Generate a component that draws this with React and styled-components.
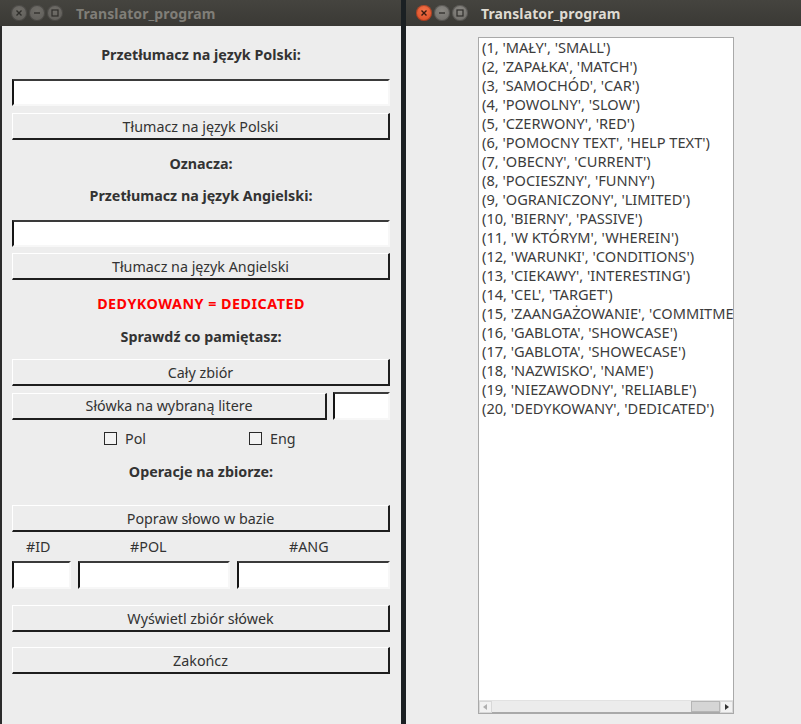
import React from 'react'
import styled, { createGlobalStyle } from 'styled-components'

const GlobalStyle = createGlobalStyle`
  html, body {
    margin: 0;
    padding: 0;
    background: #1b2023;
  }
  * {
    box-sizing: border-box;
  }
`

const words = [
  [1, 'MAŁY', 'SMALL'],
  [2, 'ZAPAŁKA', 'MATCH'],
  [3, 'SAMOCHÓD', 'CAR'],
  [4, 'POWOLNY', 'SLOW'],
  [5, 'CZERWONY', 'RED'],
  [6, 'POMOCNY TEXT', 'HELP TEXT'],
  [7, 'OBECNY', 'CURRENT'],
  [8, 'POCIESZNY', 'FUNNY'],
  [9, 'OGRANICZONY', 'LIMITED'],
  [10, 'BIERNY', 'PASSIVE'],
  [11, 'W KTÓRYM', 'WHEREIN'],
  [12, 'WARUNKI', 'CONDITIONS'],
  [13, 'CIEKAWY', 'INTERESTING'],
  [14, 'CEL', 'TARGET'],
  [15, 'ZAANGAŻOWANIE', 'COMMITMENT'],
  [16, 'GABLOTA', 'SHOWCASE'],
  [17, 'GABLOTA', 'SHOWECASE'],
  [18, 'NAZWISKO', 'NAME'],
  [19, 'NIEZAWODNY', 'RELIABLE'],
  [20, 'DEDYKOWANY', 'DEDICATED'],
]

const Desktop = styled.div`
  display: flex;
  width: 801px;
  height: 724px;
  gap: 5px;
  overflow: hidden;
  font-family: "Noto Sans", "DejaVu Sans", sans-serif;
`

const Window = styled.div`
  display: flex;
  flex-direction: column;
  width: ${p => p.$width || 'auto'};
  flex: ${p => (p.$width ? '0 0 auto' : '1')};
  height: 100%;
`

const TitleBar = styled.div`
  height: 26px;
  flex: 0 0 26px;
  display: flex;
  align-items: center;
  padding-left: ${p => p.$pad}px;
  background: linear-gradient(#45443f, #3a3935);
`

const Controls = styled.div`
  display: flex;
  gap: 2px;
  margin-right: 13px;
`

const CtlButton = styled.div`
  width: 16px;
  height: 16px;
  border-radius: 50%;
  display: flex;
  align-items: center;
  justify-content: center;
  background: ${p => (p.$close ? 'radial-gradient(circle at 50% 35%, #f0734a, #d9461f)' : p.$active ? 'radial-gradient(circle at 50% 35%, #8a8883, #6a6864)' : 'radial-gradient(circle at 50% 35%, #6f6d68, #5d5b57)')};
  box-shadow: inset 0 0 0 1px rgba(0, 0, 0, 0.25);
`

const Title = styled.div`
  font-weight: 700;
  font-size: 14px;
  color: ${p => (p.$active ? '#dfdbd2' : '#807e78')};
  letter-spacing: 0.1px;
`

const LeftBody = styled.div`
  flex: 1;
  display: flex;
  flex-direction: column;
  background: #ededed;
  border-left: 2px solid #2b2b2b;
  padding: 0 11px 0 10px;
  color: #333;
  font-size: 14.3px;
`

const RightBody = styled.div`
  flex: 1;
  background: #ededed;
  padding: 11px 0 10px 72px;
`

const Label = styled.div`
  height: 20px;
  line-height: 20px;
  text-align: center;
  font-weight: 700;
  color: ${p => p.$color || '#333'};
  letter-spacing: ${p => (p.$color ? '0.5px' : 'normal')};
  margin-top: ${p => p.$mt}px;
`

const Entry = styled.div`
  height: ${p => p.$h || 27}px;
  width: ${p => (p.$w ? `${p.$w}px` : 'auto')};
  flex: ${p => (p.$w ? '0 0 auto' : '1')};
  background: #fff;
  border-style: solid;
  border-width: 2px;
  border-color: #3a3a3a #f7f7f7 #f7f7f7 #151515;
`

const Button = styled.div`
  height: 27px;
  flex: 1;
  display: flex;
  align-items: center;
  justify-content: center;
  background: #ededed;
  border-style: solid;
  border-width: 1px 2px 2px 1px;
  border-color: #ffffff #1e1e1e #1e1e1e #ffffff;
  color: #333;
`

const Row = styled.div`
  display: flex;
  align-items: center;
  gap: ${p => p.$gap || 6}px;
  margin-top: ${p => p.$mt}px;
`

const CheckRow = styled.div`
  display: grid;
  grid-template-columns: 92px 145px 1fr;
  height: 20px;
  align-items: center;
  margin-top: 8px;
`

const Check = styled.label`
  grid-column: ${p => p.$col};
  display: flex;
  align-items: center;
  gap: 8px;
  color: #333;
`

const Box = styled.span`
  width: 13px;
  height: 13px;
  border: 1px solid #2a2a2a;
  background: #f3f3f3;
`

const FieldLabels = styled.div`
  display: grid;
  grid-template-columns: 66px 158px 1fr;
  height: 20px;
  line-height: 20px;
  margin-top: 5px;
  color: #333;
`

const FieldLabel = styled.span`
  padding-left: ${p => p.$pad}px;
`

const Listbox = styled.div`
  width: 256px;
  height: 677px;
  background: #fff;
  border: 1px solid #a9a9a9;
  display: flex;
  flex-direction: column;
  overflow: hidden;
`

const ListLines = styled.div`
  flex: 1;
  padding: 0 0 0 3px;
  overflow: hidden;
`

const ListLine = styled.div`
  height: 19px;
  line-height: 19px;
  white-space: nowrap;
  font-size: 14.6px;
  color: #3c3c3c;
`

const Scrollbar = styled.div`
  flex: 0 0 13px;
  display: flex;
  background: #ececec;
  border-top: 1px solid #e2e2e2;
`

const Arrow = styled.div`
  width: 13px;
  display: flex;
  align-items: center;
  justify-content: center;
  border: 1px solid #d8d8d8;
  background: #f2f2f2;
`

const Trough = styled.div`
  flex: 1;
  display: flex;
  justify-content: flex-end;
  background: #ececec;
  border-bottom: 1px solid #a9a9a9;
`

const Thumb = styled.div`
  width: 29px;
  background: #d5d5d5;
  border: 1px solid #b5b5b5;
`

function WindowControls({ active }) {
  return (
    <Controls>
      <CtlButton $close={active} $active={active}>
        <svg width="8" height="8" viewBox="0 0 8 8">
          <path d="M1.5 1.5 L6.5 6.5 M6.5 1.5 L1.5 6.5" stroke={active ? '#3a1a10' : '#2f2e2b'} strokeWidth="1.4" />
        </svg>
      </CtlButton>
      <CtlButton $active={active}>
        <svg width="8" height="8" viewBox="0 0 8 8">
          <path d="M1 4 H7" stroke="#2f2e2b" strokeWidth="1.3" />
        </svg>
      </CtlButton>
      <CtlButton $active={active}>
        <svg width="8" height="8" viewBox="0 0 8 8">
          <rect x="1" y="1" width="6" height="6" fill="none" stroke="#2f2e2b" strokeWidth="1.2" />
        </svg>
      </CtlButton>
    </Controls>
  )
}

function App() {
  return (
    <>
      <GlobalStyle />
      <Desktop>
        <Window $width="401px">
          <TitleBar $pad={11}>
            <WindowControls />
            <Title>Translator_program</Title>
          </TitleBar>
          <LeftBody>
            <Label $mt={19}>Przetłumacz na język Polski:</Label>
            <Row $mt={14}>
              <Entry />
            </Row>
            <Row $mt={7}>
              <Button>Tłumacz na język Polski</Button>
            </Row>
            <Label $mt={14}>Oznacza:</Label>
            <Label $mt={12}>Przetłumacz na język Angielski:</Label>
            <Row $mt={14}>
              <Entry />
            </Row>
            <Row $mt={6}>
              <Button>Tłumacz na język Angielski</Button>
            </Row>
            <Label $mt={14} $color="#ff0000">DEDYKOWANY = DEDICATED</Label>
            <Label $mt={13}>Sprawdź co pamiętasz:</Label>
            <Row $mt={12}>
              <Button>Cały zbiór</Button>
            </Row>
            <Row $mt={6}>
              <Button>Słówka na wybraną litere</Button>
              <Entry $w={57} $h={28} />
            </Row>
            <CheckRow>
              <Check $col={2}>
                <Box />
                Pol
              </Check>
              <Check $col={3}>
                <Box />
                Eng
              </Check>
            </CheckRow>
            <Label $mt={14}>Operacje na zbiorze:</Label>
            <Row $mt={23}>
              <Button>Popraw słowo w bazie</Button>
            </Row>
            <FieldLabels>
              <FieldLabel $pad={14}>#ID</FieldLabel>
              <FieldLabel $pad={52}>#POL</FieldLabel>
              <FieldLabel $pad={53}>#ANG</FieldLabel>
            </FieldLabels>
            <Row $mt={4} $gap={7}>
              <Entry $w={59} $h={28} />
              <Entry $w={152} $h={28} />
              <Entry $h={28} />
            </Row>
            <Row $mt={16}>
              <Button>Wyświetl zbiór słówek</Button>
            </Row>
            <Row $mt={15}>
              <Button>Zakończ</Button>
            </Row>
          </LeftBody>
        </Window>
        <Window>
          <TitleBar $pad={10}>
            <WindowControls active />
            <Title $active>Translator_program</Title>
          </TitleBar>
          <RightBody>
            <Listbox>
              <ListLines>
                {words.map(([id, pl, en]) => (
                  <ListLine key={id}>({id}, '{pl}', '{en}')</ListLine>
                ))}
              </ListLines>
              <Scrollbar>
                <Arrow>
                  <svg width="5" height="6" viewBox="0 0 5 6">
                    <path d="M4 0 L0 3 L4 6 Z" fill="#b0b0b0" />
                  </svg>
                </Arrow>
                <Trough>
                  <Thumb />
                </Trough>
                <Arrow>
                  <svg width="5" height="6" viewBox="0 0 5 6">
                    <path d="M1 0 L5 3 L1 6 Z" fill="#333" />
                  </svg>
                </Arrow>
              </Scrollbar>
            </Listbox>
          </RightBody>
        </Window>
      </Desktop>
    </>
  )
}

export default App
